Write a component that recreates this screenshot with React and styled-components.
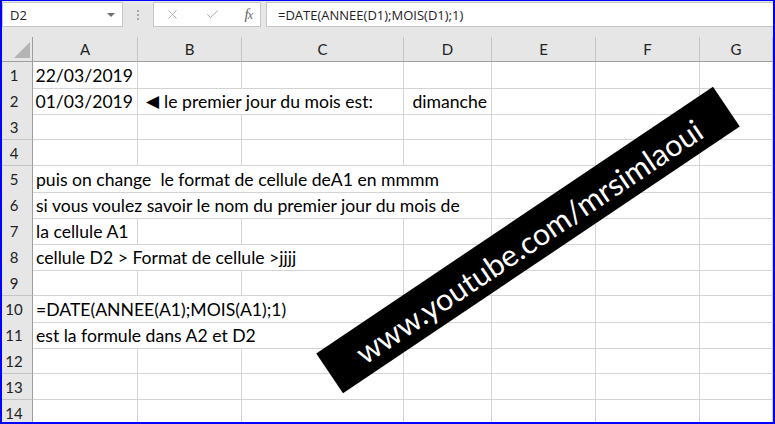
import React from "react";
import styled, { createGlobalStyle } from "styled-components";
import { X, Check } from "lucide-react";

const GlobalStyle = createGlobalStyle`
  html, body {
    margin: 0;
    padding: 0;
    background: #fff;
  }
`;

const COLS = "31px 105px 104px 162px 88px 104px 104px 1fr";
const COL_NAMES = ["A", "B", "C", "D", "E", "F", "G"];

const Frame = styled.div`
  position: relative;
  width: 775px;
  height: 424px;
  box-sizing: border-box;
  border: 2px solid #0000ff;
  border-top-width: 1px;
  overflow: hidden;
  background: #fff;
  font-family: Lato, "Open Sans", sans-serif;
`;

const Toolbar = styled.div`
  display: flex;
  align-items: flex-start;
  height: 36px;
  padding-top: 1px;
  box-sizing: border-box;
  background: #e6e6e6;
  font-family: "Open Sans", sans-serif;
  font-size: 13px;
  color: #222;
`;

const Box = styled.div`
  display: flex;
  align-items: center;
  height: 25px;
  box-sizing: border-box;
  background: #fff;
  border: 1px solid #c6c6c6;
`;

const NameBox = styled(Box)`
  width: 121px;
  padding: 0 7px 0 7px;
  justify-content: space-between;
`;

const Caret = styled.span`
  width: 0;
  height: 0;
  border-left: 4px solid transparent;
  border-right: 4px solid transparent;
  border-top: 4px solid #707070;
`;

const Grip = styled.div`
  display: flex;
  flex-direction: column;
  gap: 2px;
  margin: 8px 14px 0 14px;
  span {
    width: 2px;
    height: 2px;
    background: #a8a8a8;
  }
`;

const ActionBox = styled(Box)`
  width: 108px;
  padding: 0 8px 0 11px;
  justify-content: space-between;
  color: #a8a8a8;
`;

const Fx = styled.span`
  font-family: "Liberation Serif", serif;
  font-style: italic;
  font-size: 15px;
  color: #666;
  letter-spacing: -1px;
  small {
    font-size: 12px;
  }
`;

const FormulaBox = styled(Box)`
  flex: 1;
  margin-left: 5px;
  padding-left: 11px;
  border-right: none;
`;

const HeaderRow = styled.div`
  display: grid;
  grid-template-columns: ${COLS};
  height: 25px;
  background: #e6e6e6;
`;

const HeadCell = styled.div`
  display: flex;
  align-items: center;
  justify-content: center;
  border-right: 1px solid #c4c4c4;
  border-bottom: 1px solid #9e9e9e;
  font-size: 15px;
  color: #222;
`;

const Corner = styled(HeadCell)`
  align-items: flex-end;
  justify-content: flex-end;
  padding: 0 2px 3px 0;
  border-right-color: #9e9e9e;
`;

const CornerMark = styled.span`
  width: 0;
  height: 0;
  border-left: 16px solid transparent;
  border-bottom: 16px solid #b4b4b4;
`;

const Row = styled.div`
  display: grid;
  grid-template-columns: ${COLS};
  height: 26px;
`;

const RowNum = styled.div`
  display: flex;
  align-items: center;
  justify-content: center;
  padding-right: 6px;
  background: #e6e6e6;
  border-right: 1px solid #9e9e9e;
  border-bottom: 1px solid #c4c4c4;
  font-size: 15px;
  color: #222;
`;

const Cell = styled.div`
  grid-column: span ${(p) => p.$span || 1};
  display: flex;
  align-items: center;
  justify-content: ${(p) => (p.$align === "right" ? "flex-end" : "flex-start")};
  padding: 1px ${(p) => (p.$align === "right" ? "4px" : "0")} 0
    ${(p) => (p.$indent ? p.$indent : 3)}px;
  border-right: 1px solid #d4d4d4;
  border-bottom: 1px solid #d4d4d4;
  font-size: 17.6px;
  color: #000;
  white-space: pre;
  line-height: 25px;
`;

const Arrow = styled.span`
  font-family: "DejaVu Sans", sans-serif;
  font-size: 17px;
  margin-right: 5px;
`;

const Watermark = styled.div`
  position: absolute;
  left: 287px;
  top: 215px;
  width: 478px;
  height: 48px;
  display: flex;
  align-items: center;
  justify-content: center;
  padding-top: 2px;
  box-sizing: border-box;
  background: #000;
  color: #fff;
  font-family: Lato, sans-serif;
  font-size: 30.5px;
  transform: rotate(-33.9deg);
  pointer-events: none;
`;

const rows = [
  [{ text: "22/03/2019", align: "right" }],
  [
    { text: "01/03/2019", align: "right" },
    {
      span: 2,
      indent: 8,
      text: (
        <>
          <Arrow>◀</Arrow>le premier jour du mois est:
        </>
      ),
    },
    { text: "dimanche", align: "right" },
  ],
  [],
  [],
  [{ span: 4, text: "puis on change  le format de cellule deA1 en mmmm" }],
  [{ span: 4, text: "si vous voulez savoir le nom du premier jour du mois de" }],
  [{ text: "la cellule A1" }],
  [{ span: 3, text: "cellule D2 > Format de cellule >jjjj" }],
  [],
  [{ span: 3, text: "=DATE(ANNEE(A1);MOIS(A1);1)" }],
  [{ span: 3, text: "est la formule dans A2 et D2" }],
  [],
  [],
  [],
];

const fillRow = (cells) => {
  const used = cells.reduce((n, c) => n + (c.span || 1), 0);
  const rest = Array.from({ length: COL_NAMES.length - used }, () => ({}));
  return [...cells, ...rest];
};

export default function App() {
  return (
    <>
      <GlobalStyle />
      <Frame>
        <Toolbar>
          <NameBox>
            <span>D2</span>
            <Caret />
          </NameBox>
          <Grip>
            <span />
            <span />
            <span />
          </Grip>
          <ActionBox>
            <X size={15} strokeWidth={1.4} />
            <Check size={15} strokeWidth={1.6} />
            <Fx>
              f<small>x</small>
            </Fx>
          </ActionBox>
          <FormulaBox>=DATE(ANNEE(D1);MOIS(D1);1)</FormulaBox>
        </Toolbar>

        <HeaderRow>
          <Corner>
            <CornerMark />
          </Corner>
          {COL_NAMES.map((c) => (
            <HeadCell key={c}>{c}</HeadCell>
          ))}
        </HeaderRow>

        {rows.map((cells, i) => (
          <Row key={i}>
            <RowNum>{i + 1}</RowNum>
            {fillRow(cells).map((c, j) => (
              <Cell key={j} $span={c.span} $align={c.align} $indent={c.indent}>
                {c.text}
              </Cell>
            ))}
          </Row>
        ))}

        <Watermark>www.youtube.com/mrsimlaoui</Watermark>
      </Frame>
    </>
  );
}
